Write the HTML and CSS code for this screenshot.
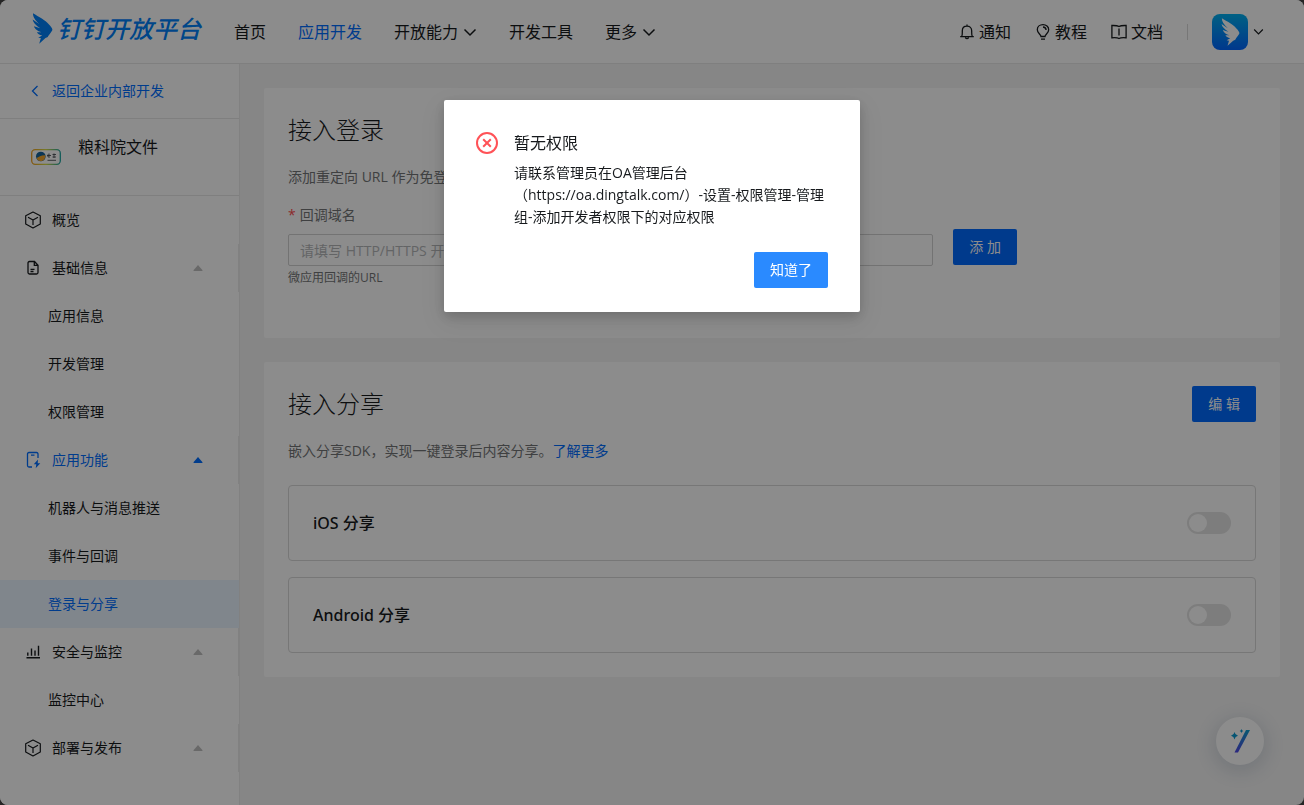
FILE: index.html
```
<!DOCTYPE html>
<html lang="zh-CN">
<head>
<meta charset="utf-8">
<meta name="viewport" content="width=device-width, initial-scale=1">
<title>钉钉开放平台</title>
<link rel="stylesheet" href="styles.css">
</head>
<body>
<svg class="defs" aria-hidden="true">
  <symbol id="wing" viewBox="0 0 62 94"><path d="M2 1C20 12 40 22 50 34C56 40 61 46 61 51C60 56 50 66 47 73L40 76L21 93L26 76L18 75L30 68C22 67 16 62 14 58L28 58C16 55 7 47 5 40L24 46C10 38 2 28 1 20L22 34C8 22 2 12 2 1Z"/></symbol>
  <symbol id="down" viewBox="0 0 14 14"><path d="M1.500 4.500L7 10L12.500 4.500" fill="none" stroke="currentColor" stroke-width="1.500"/></symbol>
  <symbol id="cube" viewBox="0 0 16 18"><path d="M8 1L15.300 4.800V13L8 17L.7 13V4.800ZM3 6.200L8 9L13 6.200M8 9V14" fill="none" stroke="currentColor" stroke-width="1.200" stroke-linejoin="round"/></symbol>
  <symbol id="caret" viewBox="0 0 10 6"><path d="M5 0L9.500 5.200Q9.700 6 9 6H1Q.3 6 .5 5.200Z" fill="currentColor"/></symbol>
</svg>
<div class="app">
  <header class="header">
    <a class="logo" href="#"><svg class="logo-wing"><use href="#wing"/></svg><span>钉钉开放平台</span></a>
    <nav class="nav">
      <a href="#">首页</a>
      <a href="#" class="active">应用开发</a>
      <a href="#">开放能力<svg class="down"><use href="#down"/></svg></a>
      <a href="#">开发工具</a>
      <a href="#">更多<svg class="down"><use href="#down"/></svg></a>
    </nav>
    <div class="tools">
      <a href="#"><svg class="tool-icon" viewBox="0 0 16 16"><path d="M1.200 12.700H14.800M2.600 12.500C3.600 11 3.300 9 3.300 7C3.300 4 5.300 2.200 8 2.200S12.700 4 12.700 7C12.700 9 12.400 11 13.400 12.500M8 .5V2.200M6.300 13.500Q8 15.800 9.700 13.500"/></svg>通知</a>
      <a href="#"><svg class="tool-icon" viewBox="0 0 16 16"><path d="M6 12.500C6 10.500 2.300 9 2.300 5.800C2.300 2.600 4.900.7 8 .7S13.700 2.600 13.700 5.800C13.700 9 10 10.500 10 12.500ZM6 15.200H10M8 3Q10.900 3.200 11.100 6"/></svg>教程</a>
      <a href="#"><svg class="tool-icon" viewBox="0 0 16 16"><path d="M8 2.500C6.500 1.500 4 1.400 .9 1.500V13.800C4 13.600 6.500 13.600 8 14.500C9.500 13.600 12 13.600 15.100 13.800V1.500C12 1.400 9.500 1.500 8 2.500ZM8 4.500V11.500"/></svg>文档</a>
      <span class="divider"></span>
      <button class="account" type="button" aria-label="账号"><span class="avatar"><svg><use href="#wing"/></svg></span><svg class="account-down"><use href="#down"/></svg></button>
    </div>
  </header>
  <div class="body">
    <aside class="sidebar">
      <a class="back" href="#"><svg viewBox="0 0 8 12"><path d="M6.500 1L1.500 6L6.500 11" fill="none" stroke="currentColor" stroke-width="1.300"/></svg>返回企业内部开发</a>
      <div class="app-info">
        <svg class="app-icon" viewBox="0 0 30 16">
          <defs><linearGradient id="rim"><stop offset="0" stop-color="#f0a020"/><stop offset=".5" stop-color="#d8dc4a"/><stop offset="1" stop-color="#1fa5a0"/></linearGradient></defs>
          <rect x=".7" y=".7" width="28.600" height="14.600" rx="3.500" fill="#fff" stroke="url(#rim)" stroke-width="1.300"/>
          <circle cx="9.800" cy="7.500" r="4.800" fill="#17639c"/><path d="M5.500 9.800Q8.500 6 14.300 6.200Q14.800 11 10 12.300Q7 12 5.500 9.800Z" fill="#f4a52a"/>
          <path d="M16 6.500H20M18 4.500V9M17 5.500V8M21.500 5.500H25M23 4.500V9M21.500 8H25M16.500 11.300H25" fill="none" stroke="#4a4f55" stroke-width=".9"/>
        </svg>
        <span>粮科院文件</span>
      </div>
      <nav class="menu">
        <a class="item" href="#"><svg class="cube"><use href="#cube"/></svg>概览</a>
        <button class="item group" type="button"><svg viewBox="0 0 16 16"><path d="M9.500 1.500H4.500Q3 1.500 3 3V12.500Q3 14 4.500 14H11.500Q13 14 13 12.500V5.200ZM9.300 1.500V5.300H13M5.500 11.500H8.500M5.500 9.300H9.500" fill="none" stroke="currentColor" stroke-width="1.300"/></svg>基础信息<svg class="caret"><use href="#caret"/></svg></button>
        <a class="sub" href="#">应用信息</a>
        <a class="sub" href="#">开发管理</a>
        <a class="sub" href="#">权限管理</a>
        <button class="item group open" type="button"><svg class="cube" viewBox="0 0 16 18"><path d="M13 7V3Q13 1.500 11.500 1.500H4Q2.500 1.500 2.500 3V14.500Q2.500 16 4 16H7M6 4.200H9.500" fill="none" stroke="currentColor" stroke-width="1.300"/><path d="M13 8.500L8.800 13.300H11.300L10.700 17.300L15.300 12.300H12.700Z" fill="currentColor"/></svg>应用功能<svg class="caret"><use href="#caret"/></svg></button>
        <a class="sub" href="#">机器人与消息推送</a>
        <a class="sub" href="#">事件与回调</a>
        <a class="sub selected" href="#">登录与分享</a>
        <button class="item group" type="button"><svg viewBox="0 0 16 16"><path d="M1.500 13.800H15M2.800 8.500V11.800M6.500 4.500V11.800M10 6.500V11.800M13.500 1.800V11.800" fill="none" stroke="currentColor" stroke-width="1.400"/></svg>安全与监控<svg class="caret"><use href="#caret"/></svg></button>
        <a class="sub" href="#">监控中心</a>
        <button class="item group" type="button"><svg class="cube"><use href="#cube"/></svg>部署与发布<svg class="caret"><use href="#caret"/></svg></button>
      </nav>
    </aside>
    <main class="main">
      <section class="card login">
        <h2>接入登录</h2>
        <p class="desc">添加重定向 URL 作为免登授权码</p>
        <form class="form">
          <div class="field">
            <label for="domain"><span class="required">*</span>回调域名</label>
            <input id="domain" type="text" placeholder="请填写 HTTP/HTTPS 开头">
            <p class="help">微应用回调的URL</p>
          </div>
          <button class="primary" type="button">添 加</button>
        </form>
      </section>
      <section class="card">
        <div class="card-head"><h2>接入分享</h2><button class="primary" type="button">编 辑</button></div>
        <p class="desc">嵌入分享SDK，实现一键登录后内容分享。<a href="#">了解更多</a></p>
        <div class="shares">
          <div class="share"><label for="ios">iOS 分享</label><input class="switch" id="ios" type="checkbox" role="switch"></div>
          <div class="share"><label for="android">Android 分享</label><input class="switch" id="android" type="checkbox" role="switch"></div>
        </div>
      </section>
    </main>
  </div>
  <button class="assistant" type="button" aria-label="助手">
    <svg viewBox="0 0 24 26"><defs><linearGradient id="wand" x1="0" y1="0" x2="0" y2="1"><stop offset="0" stop-color="#10a0d0"/><stop offset="1" stop-color="#5048e8"/></linearGradient></defs>
    <path d="M18 2H22L10 24.500H6.500Z" fill="url(#wand)"/><path d="M6.500 4Q7 7 10 7.700Q7 8.400 6.500 11.500Q6 8.400 3 7.700Q6 7 6.500 4ZM13.500 1Q13.800 2.600 15.300 3Q13.800 3.400 13.500 5Q13.200 3.400 11.700 3Q13.200 2.600 13.500 1Z" fill="#0a9ad2"/></svg>
  </button>
</div>
<div class="mask">
  <div class="modal" role="alertdialog" aria-modal="true" aria-labelledby="modal-title">
    <svg class="error" viewBox="0 0 22 22"><path d="M7.200 7.200L14.800 14.800M14.800 7.200L7.200 14.800" /><circle cx="11" cy="11" r="10"/></svg>
    <div class="modal-content">
      <h3 id="modal-title">暂无权限</h3>
      <p>请联系管理员在OA管理后台（https://oa.dingtalk.com/）-设置-权限管理-管理组-添加开发者权限下的对应权限</p>
      <button class="confirm" type="button">知道了</button>
    </div>
  </div>
</div>
</body>
</html>
```
FILE: styles.css
```
* { box-sizing: border-box; }
body {
  margin: 0;
  background: #444;
  color: #171a1d;
  font: 14px/22px "Open Sans", "Noto Sans CJK SC", sans-serif;
}
a { color: inherit; text-decoration: none; }
h2, h3, p { margin: 0; font-weight: 400; }
button, input { font: inherit; color: inherit; }
button { padding: 0; border: 0; background: none; cursor: pointer; }
svg { flex: none; }
.defs { position: absolute; width: 0; height: 0; }

.app {
  display: flex;
  flex-direction: column;
  min-height: 100vh;
  border-radius: 8px;
  overflow: hidden;
  background: #f5f5f5;
}

.header {
  display: flex;
  align-items: center;
  height: 64px;
  padding: 0 40px 0 32px;
  background: #fff;
  border-bottom: 1px solid #e8e8e8;
  font-size: 16px;
}
.logo {
  display: flex;
  align-items: center;
  gap: 4px;
  height: 32px;
  margin: 0 33px 6px 0;
  color: #0080f8;
  font-size: 24px;
  font-style: italic;
  font-weight: 500;
  white-space: nowrap;
}
.logo-wing { width: 21px; height: 31px; fill: currentColor; }
.nav { display: flex; gap: 32px; white-space: nowrap; }
.nav a { display: flex; align-items: center; gap: 5px; }
.nav .active { color: #006eff; }
.down { width: 14px; height: 14px; }
.tools { display: flex; align-items: center; gap: 24px; margin-left: auto; white-space: nowrap; }
.tools a { display: flex; align-items: center; gap: 4px; }
.tool-icon { width: 16px; height: 16px; fill: none; stroke: currentColor; stroke-width: 1.3; }
.divider { width: 1px; height: 16px; background: #d9d9d9; }
.account { display: flex; align-items: center; gap: 5px; }
.avatar {
  display: grid;
  place-items: center;
  width: 36px;
  height: 36px;
  border-radius: 8px;
  background: linear-gradient(#00b0f0, #0066ff);
}
.avatar svg { width: 19px; height: 28px; fill: #fff; }
.account-down { width: 11px; height: 11px; }

.body { display: flex; flex: 1; }
.sidebar { flex: none; width: 240px; background: #fff; border-right: 1px solid #ebebeb; }
.back {
  display: flex;
  align-items: center;
  gap: 13px;
  height: 55px;
  padding-left: 31px;
  border-bottom: 1px solid #e8e8e8;
  color: #006eff;
}
.back svg { width: 8px; height: 12px; }
.app-info {
  display: flex;
  align-items: center;
  gap: 17px;
  height: 77px;
  padding-left: 31px;
  border-bottom: 1px solid #e8e8e8;
  font-size: 16px;
}
.app-info span { align-self: flex-start; padding-top: 17px; }
.app-icon { width: 30px; height: 16px; }
.menu { display: flex; flex-direction: column; }
.item, .sub { display: flex; align-items: center; height: 48px; }
.item { gap: 11px; padding: 0 35px 0 25px; }
.item svg { width: 16px; height: 16px; }
.item .cube { height: 18px; }
.group { border-right: 1px solid #ebebeb; }
.item .caret { width: 10px; height: 6px; margin-left: auto; color: #bfbfbf; }
.open, .item.open .caret { color: #006eff; }
.sub { padding-left: 48px; }
.selected { background: #eaf4ff; color: #006eff; }

.main { display: flex; flex-direction: column; flex: 1; gap: 24px; min-width: 0; padding: 24px; }
.card { padding: 24px; background: #fff; border-radius: 2px; }
.login { min-height: 250px; }
.card h2 { font-size: 24px; line-height: 36px; font-weight: 300; }
.card-head { display: flex; align-items: center; justify-content: space-between; }
.desc { margin-top: 18px; color: #747677; }
.desc a { color: #006eff; }
.form { display: flex; align-items: center; gap: 20px; margin-top: 16px; }
.field { flex: none; width: 66.66%; }
.field label { display: block; margin-bottom: 8px; color: #747677; }
.required { margin-right: 4px; color: #ff4d4f; }
.field input {
  display: block;
  width: 100%;
  height: 32px;
  padding: 0 11px;
  border: 1px solid #d2d2d2;
  border-radius: 2px;
  background: #fff;
}
.field input::placeholder { color: #b5b7b9; opacity: 1; }
.help { margin-top: 1px; color: #747677; font-size: 12px; }
.primary { height: 36px; padding: 0 16px; border-radius: 2px; background: #006aff; color: #fff; white-space: nowrap; }
.shares { display: flex; flex-direction: column; gap: 16px; margin-top: 23px; }
.share {
  display: flex;
  align-items: center;
  justify-content: space-between;
  height: 76px;
  padding: 0 24px;
  border: 1px solid #d9d9d9;
  border-radius: 4px;
  font-family: "Noto Sans", "Noto Sans CJK SC", sans-serif;
  font-size: 16px;
  font-weight: 500;
}
.switch {
  appearance: none;
  width: 44px;
  height: 22px;
  margin: 0;
  padding: 2px;
  border-radius: 11px;
  background: #e4e4e4;
}
.switch::before { content: ""; display: block; width: 18px; height: 18px; border-radius: 9px; background: #fff; }

.assistant {
  position: fixed;
  right: 40px;
  bottom: 40px;
  display: grid;
  place-items: center;
  width: 48px;
  height: 48px;
  border-radius: 24px;
  background: #fff;
  box-shadow: 0 4px 24px rgba(30, 60, 100, 0.22);
}
.assistant svg { width: 24px; height: 26px; }

.mask {
  position: fixed;
  inset: 0;
  display: flex;
  align-items: flex-start;
  justify-content: center;
  padding-top: 100px;
  background: rgba(0, 0, 0, 0.45);
}
.modal {
  display: flex;
  gap: 16px;
  width: 416px;
  padding: 32px 32px 24px;
  border-radius: 2px;
  background: #fff;
  box-shadow: 0 9px 28px 8px rgba(0, 0, 0, 0.05), 0 6px 16px rgba(0, 0, 0, 0.08), 0 4px 12px rgba(0, 0, 0, 0.12);
}
.error { width: 22px; height: 22px; fill: none; stroke: #ff5257; stroke-width: 2; }
.modal-content { display: flex; flex-direction: column; flex: 1; min-width: 0; }
.modal h3 { font-size: 16px; line-height: 22px; }
.modal p { margin-top: 8px; }
.confirm { align-self: flex-end; height: 36px; margin-top: 24px; padding: 0 16px; border-radius: 2px; background: #2a8aff; color: #fff; }
```
